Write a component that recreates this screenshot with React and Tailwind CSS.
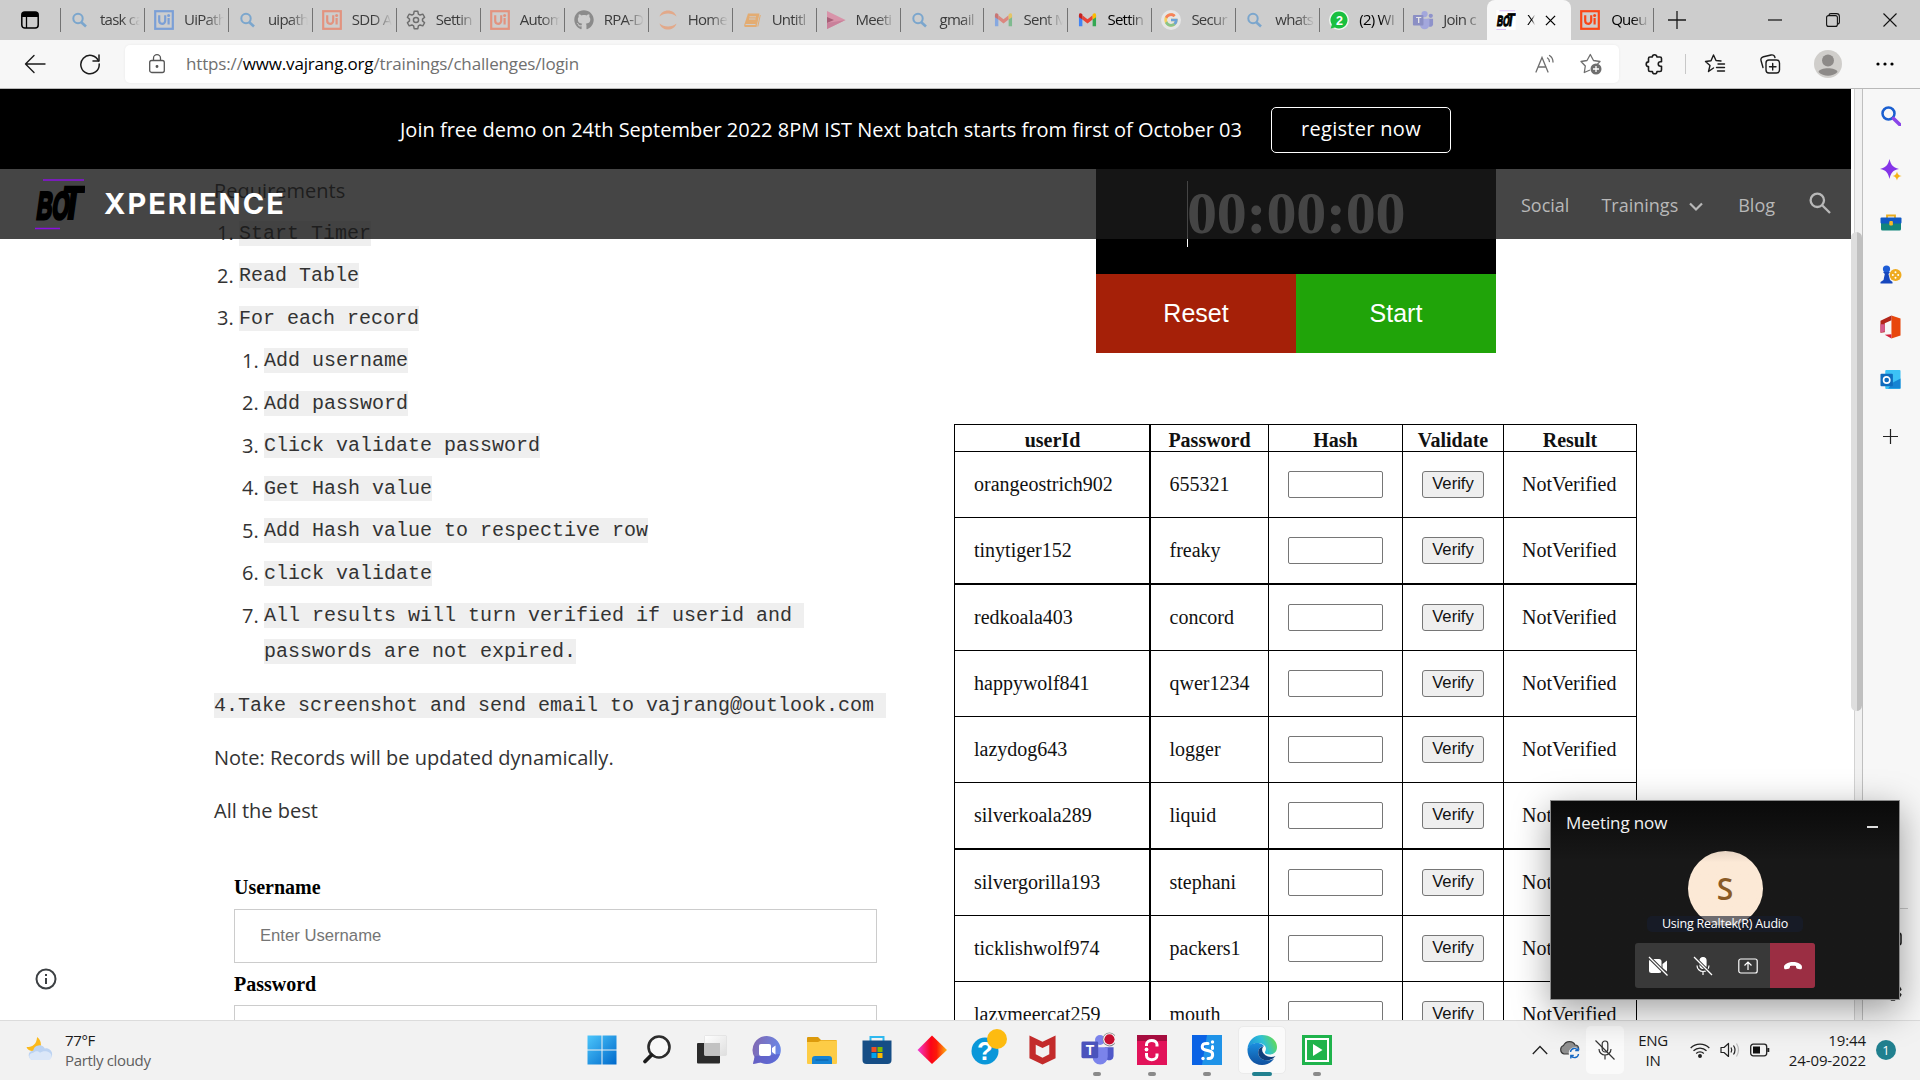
import React from "react";
import { FaGithub } from "react-icons/fa";
import { FcGoogle } from "react-icons/fc";

const seg = "font-['Open_Sans','Noto_Sans',sans-serif]";
const open = "font-['Open_Sans',sans-serif]";
const arial = "font-['Liberation_Sans',sans-serif]";
const times = "font-['Liberation_Serif',serif]";
const mono = "font-['Liberation_Mono',monospace]";

/* ---------- favicons ---------- */
const SearchFav = () => (
  <svg viewBox="0 0 20 20" className="w-5 h-5" fill="none" stroke="#7ba6cd" strokeWidth="2">
    <circle cx="8" cy="8.5" r="4.7" /><path d="M11.3 12.2 16 16.5" strokeWidth="2.6" />
  </svg>
);
const UiFav = ({ c }) => (
  <svg viewBox="0 0 20 20" className="w-5 h-5">
    <rect x="1.2" y="1.2" width="17.6" height="17.6" fill="none" stroke={c} strokeWidth="2.2" />
    <path d="M5.2 5.2v5.6a3 3 0 0 0 6 0V5.2" fill="none" stroke={c} strokeWidth="2.2" />
    <path d="M14.6 8v6.5" stroke={c} strokeWidth="2.2" /><circle cx="14.6" cy="5.6" r="1.5" fill={c} />
  </svg>
);
const GearFav = () => (
  <svg viewBox="0 0 24 24" className="w-[22px] h-[22px]" fill="none" stroke="#6e6e6e" strokeWidth="1.6" strokeLinejoin="round">
    <path d="M10 2.5h4l.6 3 1.9 1.1 2.9-1 2 3.4-2.3 2v2l2.3 2-2 3.4-2.9-1-1.9 1.1-.6 3h-4l-.6-3-1.9-1.1-2.9 1-2-3.4 2.3-2v-2l-2.3-2 2-3.4 2.9 1 1.9-1.1z" />
    <circle cx="12" cy="12" r="2.8" />
  </svg>
);
const Jupyter = () => (
  <svg viewBox="0 0 20 20" className="w-5 h-5" fill="#e2a98a">
    <path d="M1.500 6.500C4-1.500 16-1.500 18.500 6.500 14 2.500 6 2.500 1.500 6.500z" /><path d="M1.500 13.500C4 21.500 16 21.500 18.500 13.500 14 17.500 6 17.500 1.500 13.500z" />
  </svg>
);
const Book = () => (
  <svg viewBox="0 0 20 20" className="w-5 h-5">
    <path d="M6 3.500h11.500L14.500 17H3.200a1.600 1.600 0 0 1-1-2z" fill="#e3ac72" />
    <path d="M7.500 6.800h6.500M7 9h6.500M3.500 14.500h10" stroke="#cdcdcd" strokeWidth="1" /><path d="M18.300 5 15.800 16.500" stroke="#e3ac72" strokeWidth="1" />
  </svg>
);
const Stream = () => (
  <svg viewBox="0 0 20 20" className="w-5 h-5">
    <path d="M1 1 19.500 10 1 19z" fill="#d893a9" /><path d="M1 7v6l7-3z" fill="#a85f78" /><path d="M1 13 19.500 10 1 19z" fill="#c9809a" />
  </svg>
);
const Gmail = ({ o = 1 }) => (
  <svg viewBox="0 0 20 16" className="w-[19px] h-4" opacity={o}>
    <path d="M1 3v11.500h3.600V6z" fill="#4285f4" /><path d="M19 3v11.500h-3.600V6z" fill="#34a853" />
    <path d="M4.600 3 10 7.300 15.400 3v4.500L10 11.700 4.600 7.500z" fill="#ea4335" />
    <path d="M1 3c0-2.500 2-2.500 3.600-1v5.500L1 5z" fill="#c5221f" /><path d="M19 3c0-2.500-2-2.500-3.600-1v5.500L19 5z" fill="#fbbc04" />
  </svg>
);
const WhatsApp = () => (
  <svg viewBox="0 0 20 20" className="w-5 h-5">
    <circle cx="10" cy="10" r="10" fill="#f1f7f1" /><path d="M10 1.500a8.500 8.500 0 1 1-4 16L1.700 18.600 2.800 14.500A8.500 8.500 0 0 1 10 1.500z" fill="#19c03f" />
    <text x="10" y="14.500" textAnchor="middle" fontSize="12.500" fontWeight="700" fill="#fff" fontFamily="Liberation Sans">2</text>
  </svg>
);
const TeamsIcon = ({ faded, badge, className }) => (
  <svg viewBox="0 0 24 24" className={className}>
    <g opacity={faded ? 0.5 : 1}>
      <circle cx="20.500" cy="7.500" r="2.300" fill="#5059c9" /><circle cx="13.700" cy="5.500" r="3.400" fill="#7b83eb" />
      <path d="M17 10.500h6v6a3 3 0 0 1-4.500 2.500z" fill="#5059c9" /><path d="M8.500 10.500H19v6.500a5.200 5.200 0 0 1-10.400 0z" fill="#7b83eb" />
      <rect x="1" y="6.500" width="11.500" height="11.500" rx="1" fill="#4b53bc" />
      <text x="6.800" y="15.800" textAnchor="middle" fontSize="9.500" fontWeight="700" fill="#fff" fontFamily="Liberation Sans">T</text>
    </g>
    {badge && <><circle cx="20.200" cy="5" r="4.700" fill="#8a8a8a" /><circle cx="20.200" cy="5" r="4.200" fill="#fff" /><circle cx="20.200" cy="5" r="3.500" fill="#c50f2f" /></>}
  </svg>
);
const BotLogo = ({ className, line, plate }) => (
  <svg viewBox="0 0 50 52" className={className}>
    {plate && <rect width="50" height="52" fill="#fff" />}
    <path d="M8 2h41M0 50.500h25" stroke={line} strokeWidth="1.500" />
    <g fill="#000" stroke="#000" fontFamily="Liberation Sans" fontWeight="700">
      <text transform="translate(.5 41) skewX(-8) scale(.56 1)" fontSize="38.500" strokeWidth="3">BO</text>
      <text transform="translate(25 41) skewX(-8) scale(.72 1)" fontSize="47" strokeWidth="2">T</text>
    </g>
  </svg>
);

const tabs = [
  ["task ca", <SearchFav />], ["UiPath", <UiFav c="#7b9fd6" />], ["uipath", <SearchFav />], ["SDD A", <UiFav c="#e2937f" />],
  ["Settin", <GearFav />], ["Autom", <UiFav c="#e2937f" />], ["RPA-D", <FaGithub size={20} color="#8b8b8b" />], ["Home", <Jupyter />],
  ["Untitl", <Book />], ["Meeti", <Stream />], ["gmail", <SearchFav />], ["Sent M", <Gmail o={0.5} />],
  ["Settin", <Gmail />, true], ["Secur", <span className="w-5 h-5 rounded-full bg-[#e6e6e6] flex items-center justify-center"><FcGoogle size={16} opacity={0.6} /></span>], ["whats", <SearchFav />],
  ["(2) WI", <WhatsApp />, true], ["Join c", <TeamsIcon faded className="w-[22px] h-[22px]" />],
];
const fade = "[mask-image:linear-gradient(to_right,#000_55%,transparent_100%)]";

function TabStrip() {
  return (
    <div className={`h-10 bg-[#cdcdcd] flex items-end shrink-0 text-[15px] tracking-[-0.75px] ${seg}`}>
      <div className="w-[60px] h-full flex items-center justify-center">
        <svg viewBox="0 0 20 20" className="w-5 h-5"><rect x="1.800" y="2" width="16.400" height="16" rx="3" fill="none" stroke="#000" strokeWidth="1.500" /><path d="M2 7V5a3 3 0 0 1 3-3h10a3 3 0 0 1 3 3v2z" /><path d="M6.500 7v11" stroke="#000" strokeWidth="1.300" /></svg>
      </div>
      {tabs.map(([t, icon, dark], i) => (
        <div key={i} className="flex-1 max-w-[83.960px] h-full flex items-center">
          <div className="w-px h-6 bg-[#737373]" />
          <div className="w-[38px] flex justify-center shrink-0">{icon}</div>
          <div className={`w-[41px] pl-px pb-0.5 overflow-hidden whitespace-nowrap ${fade} ${dark ? "text-black" : "text-[#3c3c3c]"}`}>{t}</div>
        </div>
      ))}
      <div className="w-[84px] h-10 bg-[#f7f7f7] rounded-t-[8px] flex items-center shrink-0">
        <div className="w-[37px] flex justify-center"><BotLogo plate line="#bf8af0" className="w-5 h-5" /></div>
        <div className={`w-[8px] ml-[3px] pb-0.5 overflow-hidden text-black ${fade}`}>X</div>
        <svg viewBox="0 0 12 12" className="w-[11px] h-[11px] ml-[10px]"><path d="M1 1l10 10M11 1 1 11" stroke="#000" strokeWidth="1.400" /></svg>
      </div>
      <div className="w-[83px] h-full flex items-center shrink-0">
        <div className="w-[37px] flex justify-center"><UiFav c="#fa4616" /></div>
        <div className={`w-[38px] ml-[3px] pb-0.5 overflow-hidden whitespace-nowrap text-black ${fade}`}>Queu</div>
        <div className="w-px h-6 bg-[#737373] ml-auto" />
      </div>
      <div className="w-[46px] h-full flex items-center justify-center shrink-0">
        <svg viewBox="0 0 18 18" className="w-[18px] h-[18px]"><path d="M9 0v18M0 9h18" stroke="#1a1a1a" strokeWidth="1.300" /></svg>
      </div>
      <div className="w-[219px] h-full flex items-center justify-end pr-[22px] gap-[43.500px] shrink-0">
        <svg viewBox="0 0 14 14" className="w-[14px] h-[14px]"><path d="M0 7h14" stroke="#111" strokeWidth="1.200" /></svg>
        <svg viewBox="0 0 14 14" className="w-[14px] h-[14px]" fill="none" stroke="#111" strokeWidth="1.100"><rect x=".600" y="2.600" width="10.800" height="10.800" rx="2" /><path d="M3 2.500C3 1.200 4 .600 5 .600h5.500c1.800 0 2.900 1 2.900 2.900V9c0 1.200-.6 2-1.900 2" /></svg>
        <svg viewBox="0 0 14 14" className="w-[14px] h-[14px]"><path d="M.500.500l13 13M13.500.500l-13 13" stroke="#111" strokeWidth="1.100" /></svg>
      </div>
    </div>
  );
}

function Toolbar() {
  const st = { fill: "none", stroke: "#1b1b1b", strokeWidth: 1.4, strokeLinejoin: "round", strokeLinecap: "round" };
  return (
    <div className="h-[49px] bg-[#f7f7f7] border-b border-[#b9b9b9] flex items-center shrink-0">
      <div className="w-[70px] flex justify-center"><svg viewBox="0 0 22 20" className="w-[22px] h-5" {...st}><path d="M21 10H1.500M10 1.500 1.500 10l8.500 8.500" /></svg></div>
      <div className="w-[40px] flex justify-center"><svg viewBox="0 0 22 22" className="w-[22px] h-[22px]" {...st} strokeWidth="1.500"><path d="M19.500 8A9.200 9.200 0 1 0 20.200 11" /><path d="M20 2v6h-6" /></svg></div>
      <div className="ml-[15px] w-[1494px] h-[38px] rounded-[5px] bg-white shadow-[0_0_3px_rgba(0,0,0,0.06)] flex items-center">
        <svg viewBox="0 0 16 20" className="w-4 h-5 ml-[24px]" fill="none" stroke="#565656" strokeWidth="1.300"><rect x=".700" y="6.500" width="14.600" height="12" rx="2" /><path d="M4.500 6.500V4.200a3.500 3.500 0 0 1 7 0v2.300" /><circle cx="8" cy="12.500" r=".8" fill="#565656" /></svg>
        <div className={`ml-[21px] text-[17px] tracking-[-0.16px] text-[#707070] whitespace-nowrap ${seg}`}>https://<span className="text-black">www.vajrang.org</span>/trainings/challenges/login</div>
        <div className="ml-auto flex items-center gap-[25px] pr-[17px]">
          <svg viewBox="0 0 20 20" className="w-5 h-5 ml-px" fill="none" stroke="#6e6e6e" strokeWidth="1.300" strokeLinecap="round"><path d="M1 18 7 3.500 13 18M3 13h8M12.500 4c1.300.8 1.900 2 1.900 3.600M14.500 1.500c2.300 1.500 3.500 3.500 3.500 6.500" /></svg>
          <svg viewBox="0 0 22 22" className="w-[22px] h-[22px]" fill="none" stroke="#6e6e6e" strokeWidth="1.300" strokeLinejoin="round"><path d="M10 17 4.300 19.500l1-6.500L1 8.500l6-1 3.300-6 3.200 6 6.500 1-2.500 2.500" /><circle cx="16" cy="16" r="5.500" fill="#6e6e6e" stroke="none" /><path d="M16 13v6M13 16h6" stroke="#fff" /></svg>
        </div>
      </div>
      <div className="flex-1 flex items-center pl-[24px]">
        <svg viewBox="0 0 22 22" className="w-[22px] h-[22px]" {...st} strokeWidth="1.600"><path d="M7 4h2.300a2.300 2.300 0 0 1 4.600 0H17a1.500 1.500 0 0 1 1.500 1.500v3.300h-1a2.200 2.200 0 0 0 0 4.500h1V17a1.500 1.500 0 0 1-1.500 1.500h-3a2.300 2.300 0 0 1-4.600 0H7A1.500 1.500 0 0 1 5.500 17v-3.500a2.300 2.300 0 0 1 0-4.600V5.500A1.500 1.500 0 0 1 7 4z" /></svg>
        <div className="w-px h-5 bg-[#c8c8c8] ml-[20px]" />
        <svg viewBox="0 0 22 22" className="w-[22px] h-[22px] ml-[18px]" {...st}><path d="M9.500 15 4.500 18.500l1.500-6L1.500 8.500l5.500-.700L9.500 2l2.500 5.500 5 .5M14 11h6.500M12.500 14.500h8M13.500 18h7" /></svg>
        <svg viewBox="0 0 22 22" className="w-[22px] h-[22px] ml-[33px]" {...st}><rect x="7" y="7" width="13.500" height="13" rx="3" /><path d="M13.700 10.500v6.500M10.500 13.700H17M16 4.500C15.500 2.500 14 1.500 12 2L4.500 3.700C2.500 4.200 1.500 5.700 2 7.500L4 14.500" /></svg>
        <svg viewBox="0 0 28 28" className="w-7 h-7 ml-[33px]"><circle cx="14" cy="14" r="14" fill="#d0cecb" /><circle cx="14" cy="10.500" r="6" fill="#8d8a88" /><path d="M4.500 22c1-5 18-5 19 0A14 14 0 0 1 4.500 22z" fill="#8d8a88" /></svg>
        <svg viewBox="0 0 18 4" className="w-[18px] h-1 ml-[34px]"><circle cx="2" cy="2" r="1.600" /><circle cx="9" cy="2" r="1.600" /><circle cx="16" cy="2" r="1.600" /></svg>
      </div>
    </div>
  );
}

/* ---------- web page ---------- */
const Code = ({ children }) => <span className={`bg-[#efefef] whitespace-pre leading-[25px] h-[25px] inline-block ${mono}`}>{children}</span>;
const Li = ({ n, sub, children }) => (
  <div className={`h-[42.5px] flex items-center ${sub ? "pl-[28px]" : "pl-[3px]"}`}>
    <span className="w-[22px]">{n}.</span><Code>{children}</Code>
  </div>
);
const nested = ["Add username", "Add password", "Click validate password", "Get Hash value", "Add Hash value to respective row", "click validate"];

function Instructions() {
  return (
    <div className={`w-[700px] pt-[80px] text-[20px] text-[#333] ${open}`}>
      <div className="h-[43px] flex items-center">Requirements</div>
      <Li n={1}>Start Timer</Li><Li n={2}>Read Table</Li><Li n={3}>For each record</Li>
      {nested.map((t, i) => <Li key={t} n={i + 1} sub>{t}</Li>)}
      <Li n={7} sub>{"All results will turn verified if userid and "}</Li>
      <div className="pl-[50px] h-[28px] flex items-center"><Code>passwords are not expired.</Code></div>
      <div className="h-[53.300px] mt-[14px] flex items-center"><Code>{"4.Take screenshot and send email to vajrang@outlook.com "}</Code></div>
      <div className="h-[53.300px] flex items-center -mt-px">Note: Records will be updated dynamically.</div>
      <div className="h-[53.300px] flex items-center">All the best</div>
      <form className="pl-[20px] pt-[36px] w-[663px] text-black">
        <label className={`block font-bold h-[35px] leading-[27px] ${times}`}>Username</label>
        <div className={`h-[54px] border border-[#ccc] flex items-center pl-[25px] pb-px text-[16.670px] text-[#757575] ${arial}`}>Enter Username</div>
        <label className={`block font-bold h-[42px] leading-[42px] ${times}`}>Password</label>
        <div className="h-[54px] border border-[#ccc]" />
      </form>
    </div>
  );
}

const rows = [
  ["orangeostrich902", "655321"], ["tinytiger152", "freaky"], ["redkoala403", "concord"], ["happywolf841", "qwer1234"], ["lazydog643", "logger"],
  ["silverkoala289", "liquid"], ["silvergorilla193", "stephani"], ["ticklishwolf974", "packers1"], ["lazymeercat259", "mouth"],
];
const cols = "grid grid-cols-[196px_118px_134px_101px_133px]";
const cell = "border-l border-black flex items-center";

function Records() {
  return (
    <div className={`w-[683px] border-r border-black text-[20px] text-[#111] ${times}`}>
      <div className={`${cols} h-[27px] border-t border-black font-bold`}>
        {["userId", "Password", "Hash", "Validate", "Result"].map((h, i) => (
          <div key={h} className={`border-black flex items-center justify-center pb-[2px] ${i === 1 ? "border-l-2 -ml-px" : "border-l"}`}>{h}</div>
        ))}
      </div>
      {rows.map(([u, p], i) => (
        <div key={u} className={`${cols} border-black ${i === 2 || i === 6 ? "border-t-2 h-[67px]" : "border-t h-[66px]"}`}>
          <div className={`${cell} pl-[19px] pb-[2px]`}>{u}</div>
          <div className="border-l-2 -ml-px border-black flex items-center pl-[18.500px] pb-[2px]">{p}</div>
          <div className={`${cell} pl-[19px]`}><div className="w-[95px] h-[27px] border border-[#767676] rounded-[2px] bg-white" /></div>
          <div className={`${cell} pl-[19px]`}><button className={`w-[62px] h-[27px] border border-[#767676] rounded-[3px] bg-[#efefef] text-[16.670px] leading-none ${arial}`}>Verify</button></div>
          <div className={`${cell} pl-[18px] pb-[2px]`}>NotVerified</div>
        </div>
      ))}
    </div>
  );
}

function Timer() {
  return (
    <div className="w-[400px] ml-[142px]">
      <div className="h-[185px] bg-black flex items-end pl-[91px] pb-[27px]">
        <div className={`border-l border-white h-[66px] leading-[64px] text-[60px] tracking-[-0.2px] font-bold text-white ${times}`}><span className="-ml-px">00:00:00</span></div>
      </div>
      <div className={`grid grid-cols-2 h-[79px] text-[25px] text-white ${arial}`}>
        <div className="bg-[#a52008] flex items-center justify-center">Reset</div>
        <div className="bg-[#20a409] flex items-center justify-center">Start</div>
      </div>
    </div>
  );
}

function SiteHeader() {
  return (
    <header className={`absolute inset-x-0 top-0 ${open}`}>
      <div className="h-20 bg-black flex items-center text-[20px] text-white pl-[400px] pt-[2px] whitespace-nowrap">
        <div className="w-[871px]">Join free demo on 24th September 2022 8PM IST Next batch starts from first of October 03</div>
        <div className="w-[180px] h-[46px] rounded-[5px] border border-white flex items-center justify-center pb-[2px] tracking-[0.3px]">register now</div>
      </div>
      <div className="h-[70px] bg-[rgba(26,26,26,0.81)] flex items-center text-[18px] text-[#b8b8b8]">
        <BotLogo line="#8a10e0" className="w-[50px] h-[52px] ml-[35px]" />
        <div className="ml-[19px] pb-[2px] text-[29px] leading-none font-bold text-white tracking-[2px] font-['Inter',sans-serif]">XPERIENCE</div>
        <div className="ml-auto flex items-center pr-[20px] pt-[2px]">
          <span className="mr-[32px]">Social</span><span>Trainings</span>
          <svg viewBox="0 0 14 10" className="w-[14px] h-[10px] ml-[11px] mr-[35px] mt-1"><path d="M1 1.500 7 7.500l6-6" fill="none" stroke="#b8b8b8" strokeWidth="2.200" /></svg>
          <span className="mr-[34px]">Blog</span>
          <svg viewBox="0 0 22 22" className="w-[22px] h-[22px] -mt-1" fill="none" stroke="#b8b8b8" strokeWidth="2.300"><circle cx="8.300" cy="8.300" r="6.700" /><path d="m13.200 13.200 7.800 7.800" /></svg>
        </div>
      </div>
    </header>
  );
}

function Sidebar() {
  const box = "h-[52.700px] flex items-center justify-center";
  return (
    <aside className="flex-1 bg-[#f7f7f7] flex flex-col pr-[2px]">
      <div className="h-[1px]" />
      <div className={box}><svg viewBox="0 0 20 20" className="w-5 h-5" fill="none"><circle cx="7.500" cy="7.500" r="6" stroke="#1a5fd0" strokeWidth="2.500" /><path d="m12.500 12.500 6.200 6" stroke="#8a45e8" strokeWidth="3.600" strokeLinecap="round" /></svg></div>
      <div className={`${box} pt-[2px]`}><svg viewBox="0 0 22 22" className="w-[22px] h-[22px]"><path d="M9.500 0c1.500 6 3 8 9.500 10-6.500 1.500-8 3.500-9.500 10C8 13.500 6.500 11.500 0 10 6.500 8 8 6 9.500 0z" fill="#8535e8" /><path d="M17 12.500c.7 3 1.500 3.800 4.800 4.500-3.300.7-4 1.500-4.800 4.500-.8-3-1.500-3.800-4.500-4.500 3-.7 3.800-1.500 4.500-4.500z" fill="#f5b316" /></svg></div>
      <div className={box}><svg viewBox="0 0 22 18" className="w-[22px] h-[18px]"><path d="M7 5V2.500h8V5" fill="none" stroke="#e9ab1c" strokeWidth="1.800" /><rect x="1" y="8" width="20" height="9.500" rx="1.500" fill="#12857c" /><rect x=".5" y="4.500" width="21" height="6" rx="1" fill="#1159c5" /><rect x="9.300" y="8" width="3.600" height="4.500" rx="1" fill="#f6b92a" /></svg></div>
      <div className={box}><svg viewBox="0 0 22 19" className="w-[22px] h-[19px]"><circle cx="15.500" cy="10" r="6" fill="#efab1f" /><g fill="#fff"><circle cx="15.500" cy="7.300" r="1" /><circle cx="18.200" cy="10" r="1" /><circle cx="12.800" cy="10" r="1" /><circle cx="15.500" cy="12.700" r="1" /></g><circle cx="6.500" cy="4" r="3.600" fill="#1d5cd6" /><path d="M3 7h7l-1.500 2 1.500 6 2.500 2v1.500H.500V17L3.500 15 4.800 9z" fill="#1747bd" /></svg></div>
      <div className={box}><svg viewBox="0 0 22 24" className="w-[21px] h-6"><path d="M12 0 21.500 3v18L12 24V19.500V5z" fill="#e8470c" /><path d="M12 0v5L5 8v9.500L.5 18V5.500z" fill="#b3261a" /><path d="M.5 9v9l4.500-1.500V9z" fill="#d75b8d" /><path d="m5 20 7-.5V24z" fill="#d3203c" /></svg></div>
      <div className={box}><svg viewBox="0 0 22 22" className="w-[21px] h-[21px]"><rect x="5.500" y="1" width="16" height="20" rx="1" fill="#3cc2f5" /><path d="m14 14 7.500-4v10.500h-13z" fill="#1684d3" /><rect x=".5" y="5" width="13" height="13" rx="1" fill="#0f6cbd" /><circle cx="7" cy="11.500" r="3.300" fill="none" stroke="#fff" strokeWidth="1.700" /></svg></div>
      <div className="h-[60px] flex items-center justify-center"><svg viewBox="0 0 15 15" className="w-[15px] h-[15px]"><path d="M7.500 0v15M0 7.500h15" stroke="#222" strokeWidth="1.200" /></svg></div>
      <div className="mt-auto mb-[18px]">
        <div className="h-px bg-[#c8c8c8] mx-[10px]" />
        <div className="pt-[22px] pl-[23px] text-[#222]">
          <svg viewBox="0 0 16 16" className="w-4 h-4" fill="none" stroke="currentColor" strokeWidth="1.600"><rect x="1" y="2" width="14" height="12" rx="2.500" /></svg>
          <svg viewBox="0 0 24 24" className="w-[20px] h-[20px] mt-[35px] -ml-[3px]" fill="none" stroke="currentColor" strokeWidth="1.800" strokeLinejoin="round"><path d="M10 2.500h4l.6 3 1.900 1.100 2.900-1 2 3.400-2.300 2v2l2.300 2-2 3.400-2.900-1-1.900 1.100-.6 3h-4l-.6-3-1.900-1.100-2.900 1-2-3.400 2.300-2v-2l-2.300-2 2-3.400 2.900 1 1.900-1.100z" /></svg>
        </div>
      </div>
    </aside>
  );
}

function MeetingPopup() {
  const b = "w-[45px] h-[45px] flex items-center justify-center";
  return (
    <div className={`absolute left-[1550px] top-[711px] w-[350px] h-[200px] bg-[#171717] bg-linear-to-b from-[#0a0a0a] to-[#181818] to-30% border border-[#8a8a8a] shadow-[0_10px_34px_rgba(0,0,0,0.38)] text-white flex flex-col items-center ${seg}`}>
      <div className="h-[43px] w-full flex items-center justify-between pl-[15px] pr-[21px]">
        <span className="text-[17px] tracking-[-0.13px] text-[#f2f2f2]">Meeting now</span>
        <span className="w-[11px] h-[2px] bg-[#ddd] mt-[8px]" />
      </div>
      <div className="mt-[7px] w-[75px] h-[75px] rounded-full bg-linear-to-b from-[#e6d4c3] to-[#fce9d6] to-15% flex items-center justify-center text-[30px] font-semibold text-[#8a5a26]">S</div>
      <div className="relative -mt-[10.500px] w-[156px] h-4 rounded-[5px] bg-[rgba(22,29,46,0.62)] text-[12.500px] leading-4 text-center tracking-[-0.22px] whitespace-nowrap">Using Realtek(R) Audio</div>
      <div className="mt-[11.500px] flex bg-[#393939] rounded-[3px] overflow-hidden">
        <div className={b}><svg viewBox="0 0 20 20" className="w-5 h-5"><rect x="1" y="3" width="12.500" height="14" rx="2.500" fill="#fff" /><path d="m14.500 8 4.500-3.500v11L14.500 12z" fill="#fff" /><path d="m0 0 20 20" stroke="#393939" strokeWidth="3.400" /><path d="m1 1 18.500 18.500" stroke="#fff" strokeWidth="1.200" /></svg></div>
        <div className={b}><svg viewBox="0 0 20 20" className="w-5 h-5" fill="none" stroke="#fff" strokeWidth="1.200"><rect x="7" y="1.500" width="6" height="11" rx="3" fill="#fff" /><path d="M4 9.500a6 6 0 0 0 12 0M10 15.500V19" /><path d="m1 1 18 18" stroke="#393939" strokeWidth="3.200" /><path d="m1 1 18 18" /></svg></div>
        <div className={b}><svg viewBox="0 0 20 16" className="w-5 h-4" fill="none" stroke="#fff" strokeWidth="1.200"><rect x=".8" y="1" width="18.400" height="14" rx="2" /><path d="M10 12V4.500M6.500 7.500 10 4l3.500 3.500" /></svg></div>
        <div className={`${b} bg-[#9b2e43]`}><svg viewBox="0 0 20 10" className="w-5 h-[10px]"><path d="M10 1c5.500 0 9.300 2.600 9 5.300-.1 2-1 2.200-2 2l-2.600-.6c-1.200-.3-1.300-1-1.500-2.700C11.300 4.500 8.700 4.500 7.100 5c-.2 1.700-.3 2.400-1.500 2.700L3 8.300c-1 .2-1.900 0-2-2C.7 3.600 4.500 1 10 1z" fill="#fff" /></svg></div>
      </div>
    </div>
  );
}

/* ---------- taskbar ---------- */
const App30 = ({ children, run, active }) => (
  <div className="w-[55px] h-full flex items-center justify-center relative pb-[2px]">
    <div className={active ? "w-12 h-12 rounded-[5px] bg-[#fafafa] border border-[#ebebeb] flex items-center justify-center" : ""}>{children}</div>
    {run && <span className="absolute bottom-[4px] w-2 h-1 rounded-full bg-[#8a8a8a]" />}
    {active && <span className="absolute bottom-[4px] w-5 h-1 rounded-full bg-[#21808f]" />}
  </div>
);
const S = ({ children, className = "w-[30px] h-[30px]" }) => <svg viewBox="0 0 30 30" className={className}>{children}</svg>;

function Taskbar() {
  return (
    <footer className={`h-[60px] bg-[#f2f2f2] border-t border-[#dcdcdc] flex items-center shrink-0 pl-[25px] ${seg}`}>
      <svg viewBox="0 0 30 26" className="w-[29px] h-[25px] mb-[4px]"><path d="M12.500 1c-.5 7-4 10.500-11 10.500C3 18 16 17 16.500 9 16.500 5.500 15 3 12.500 1z" fill="#fbb91c" /><path d="M9 25a5 5 0 0 1-.5-10 6.500 6.500 0 0 1 12-2 6 6 0 0 1 3 12z" fill="#bcd3f2" /><path d="M8 25c-5 0-5-7 .5-7.500 2-2.500 6-2 7 0 3-3 12-2 12 3.500 0 3-2 4-4 4z" fill="#dbe7f8" /></svg>
      <div className="ml-[11px] pb-[2px] w-[485px] text-[15px] leading-[20px] tracking-[-0.33px]"><div className="text-[#1a1a1a]">77°F</div><div className="text-[#5e5e5e]">Partly cloudy</div></div>
      <div className="flex h-full ml-[24.500px]">
        <App30><S><defs><linearGradient id="w" x1="0" y1="0" x2="1" y2="1"><stop stopColor="#4cc6fb" /><stop offset="1" stopColor="#0069cb" /></linearGradient></defs><path d="M.5.500h14v14H.500zM15.500.500h14v14h-14zM.500 15.500h14v14H.500zM15.500 15.500h14v14h-14z" fill="url(#w)" /></S></App30>
        <App30><S><circle cx="17" cy="12" r="10.500" fill="#f8f8f8" stroke="#2c2c2c" strokeWidth="2.600" /><path d="M9.500 20 3 26.500" stroke="#1b1b1b" strokeWidth="3.800" strokeLinecap="round" /></S></App30>
        <App30><S><defs><linearGradient id="tv" x1="0" y1="0" x2="1" y2="1"><stop stopColor="#fff" /><stop offset="1" stopColor="#dedede" /></linearGradient></defs><rect x="0" y="8" width="23" height="20.500" rx="1" fill="#2b2b2b" /><rect x="7.500" y=".5" width="22" height="20" rx="1" fill="url(#tv)" stroke="#dcdcdc" strokeWidth=".6" /><rect x="7.500" y="8" width="15.500" height="12.500" fill="#c2c2c2" /></S></App30>
        <App30><S><defs><linearGradient id="c" x1="0" y1="0" x2="1" y2="0.300"><stop stopColor="#8366ae" /><stop offset="1" stopColor="#6a87e6" /></linearGradient></defs><path d="M15 1a14 14 0 1 1-6.500 26.500L1 29l1.500-7A14 14 0 0 1 15 1z" fill="url(#c)" /><path d="M15 29A14 14 0 0 0 28 19L3 21l-2 8 7.500-1.500z" fill="#5657c8" opacity=".6" /><rect x="7" y="9" width="12" height="12" rx="2" fill="#fff" /><path d="m20 13 3.500-2.500v9L20 17z" fill="#fff" /></S></App30>
        <App30><S><path d="M0 3a1 1 0 0 1 1-1h10l3 3h15.500v8H0z" fill="#dc9a0c" /><path d="M0 7h11l3-1.500h16V28a1 1 0 0 1-1 1H1a1 1 0 0 1-1-1z" fill="#fdcc46" /><path d="M5 29v-5a3 3 0 0 1 3-3h14a3 3 0 0 1 3 3v5z" fill="#1583d4" /><path d="M8.500 25h13" stroke="#0c5b9c" /></S></App30>
        <App30><S><path d="M8.500 6V2h13v4" fill="none" stroke="#2fb9ef" strokeWidth="2" /><path d="M.5 5.500h29V25a4 4 0 0 1-4 4h-21a4 4 0 0 1-4-4z" fill="#164e86" /><path d="M9.500 12h5v5h-5z" fill="#f25022" /><path d="M15.500 12h5v5h-5z" fill="#7fba00" /><path d="M9.500 18h5v5h-5z" fill="#00a4ef" /><path d="M15.500 18h5v5h-5z" fill="#ffb900" /></S></App30>
        <App30><S><defs><linearGradient id="d"><stop stopColor="#f03cd6" /><stop offset=".45" stopColor="#fc0418" /><stop offset=".65" stopColor="#fc1a08" /><stop offset="1" stopColor="#fdb813" /></linearGradient></defs><path d="M15 0.500 30 15 15 29 0.500 15z" fill="url(#d)" /></S></App30>
        <App30><svg viewBox="0 0 36 36" className="w-9 h-9 -mt-[5px] ml-[3px]"><circle cx="14" cy="22" r="13.500" fill="#0a97d9" /><text x="14" y="31" textAnchor="middle" fontSize="26" fontWeight="700" fill="#fff" fontFamily="Liberation Sans">?</text><circle cx="26" cy="10" r="10" fill="#fdbb10" /></svg></App30>
        <App30><S className="w-[29px] h-[30px]"><path d="M1.500 0 15 6.500 28.500 0v23.500L15 30 1.500 23.500z" fill="#c32b2b" /><path d="M8 9.500 15 13l7-3.500v9.800L15 23l-7-3.700z" fill="#f2f2f2" /></S></App30>
        <App30 run><TeamsIcon badge className="w-[35px] h-[35px]" /></App30>
        <App30 run><S><rect width="30" height="30" fill="#e2135a" /><path d="M0 0h30v6H0z" fill="#a60d3f" /><path d="M20 11.500V9.500C20 4 9.500 4 9.500 9.500V11M9.500 18v2.500c0 5.500 10.500 5.500 10.500 0v-2" fill="none" stroke="#fff" strokeWidth="3" /><circle cx="9.500" cy="14.500" r="1.900" fill="#fff" /></S></App30>
        <App30 run><S><rect width="30" height="30" fill="#0b63e5" /><path d="M15 0h15v30H10z" fill="#1f93e8" /><path d="M16 8.500h-1.500c-5.500 0-5.500 5.500-1 6.500l4 1c4.500 1 4 7.500-.5 7.500h-1" fill="none" stroke="#fff" strokeWidth="3" strokeLinecap="round" /><g fill="#fff"><circle cx="20.500" cy="7" r="1.700" /><circle cx="11" cy="23.500" r="1.700" /><rect x="19" y="10" width="3" height="5" rx="1.500" /></g></S></App30>
        <App30 active><S><defs><linearGradient id="e1" x1="0" y1=".6" x2="1" y2=".3"><stop stopColor="#1d8fdc" /><stop offset=".55" stopColor="#2fc0d6" /><stop offset="1" stopColor="#66dc4a" /></linearGradient><linearGradient id="e2" x1="0" y1="0" x2="0" y2="1"><stop stopColor="#1b8fe0" /><stop offset="1" stopColor="#0f4f9e" /></linearGradient></defs><path d="M.5 14C1 6 7 0 15 0c9 0 15 6 15 12 0 5-3.500 7.500-7.500 7.500-3.500 0-5-1-4.500-2.500 3-5-1.500-9-6.500-9C6 8 2 11 .5 14z" fill="url(#e1)" /><path d="M.5 14C2 9.500 7 7.500 11.500 8c3 .3 5 2 5.500 3.500-5 0-7 5-5 9.500 2.500 5 10 5.500 15 2.500C25 27.500 20 30 15 30 6 30 0 22.500.5 14z" fill="url(#e2)" /><path d="M12 21c-2-4.500 0-9 4.500-9.500-3 3-1 8 4.500 10 2.500.800 5.500.5 7.500-.5C24 27 14.500 26.500 12 21z" fill="#0f3f7c" /></S></App30>
        <App30 run><S><rect width="30" height="30" fill="#1fb34c" /><rect x="4" y="4" width="22" height="22" fill="none" stroke="#fff" strokeWidth="2" /><path d="M11 9v12l9.500-6z" fill="#fff" /></S></App30>
      </div>
      <div className="ml-auto flex items-center h-full pr-[24px] pb-[2px] text-[#1a1a1a]">
        <svg viewBox="0 0 16 10" className="w-4 h-[10px]"><path d="m.8 9 7.200-7.500L15.200 9" fill="none" stroke="#222" strokeWidth="1.300" /></svg>
        <svg viewBox="0 0 22 18" className="w-[22px] h-[18px] ml-[11px]"><path d="M5 13a4.500 4.500 0 0 1-.5-8.500C7-.5 14-.5 16 4c5 0 5 9 0 9z" fill="#8f8f8f" stroke="#3a3a3a" strokeWidth="1.200" /><circle cx="15.500" cy="12" r="5.800" fill="#f2f2f2" /><path d="M11.500 11a4 4 0 0 1 7.500-1.500M19.500 13a4 4 0 0 1-7.500 1.500M19.200 6.500v3h-3M11.800 17.500v-3h3" fill="none" stroke="#1769c4" strokeWidth="1.400" /></svg>
        <div className="w-[38px] h-12 rounded-[5px] bg-[#fafafa] ml-[5px] flex items-center justify-center"><svg viewBox="0 0 20 20" className="w-5 h-5" fill="none" stroke="#333" strokeWidth="1.200"><rect x="7.200" y="1" width="5.600" height="11" rx="2.800" /><path d="M4 9a6 6 0 0 0 12 0M10 15v4.500M.500.500l19 19" /></svg></div>
        <div className="w-[58px] text-center text-[15px] leading-[20px] tracking-[-0.3px]">ENG<br />IN</div>
        <svg viewBox="0 0 20 16" className="w-5 h-4 ml-[8px]" fill="none" stroke="#222" strokeWidth="1.300"><path d="M.7 6a13 13 0 0 1 18.600 0M3.500 8.800a9.200 9.200 0 0 1 13 0M6.200 11.500a5.400 5.400 0 0 1 7.600 0" /><circle cx="10" cy="14" r="1.300" fill="#222" /></svg>
        <svg viewBox="0 0 20 16" className="w-5 h-4 ml-[10px]" fill="none" stroke="#222" strokeWidth="1.200" strokeLinejoin="round"><path d="M1 5.500h3L8.500 1.500v13L4 10.500H1zM11 5.500q1.500 2.500 0 5M13.500 3.500q3 4.500 0 9" /><path d="M16.500 1.500q4 6.500 0 13" stroke="#bbb" /></svg>
        <svg viewBox="0 0 20 14" className="w-5 h-[14px] ml-[10px]" fill="none" stroke="#222" strokeWidth="1.300"><rect x=".7" y="1.200" width="16" height="11.600" rx="2.500" /><rect x="3" y="3.500" width="7" height="7" fill="#111" stroke="none" /><path d="M18.300 5v4" strokeWidth="2" /></svg>
        <div className="w-[96px] text-right text-[15px] leading-[20px] tracking-[-0.1px] whitespace-nowrap"><div>19:44</div><div>24-09-2022</div></div>
        <div className="w-5 h-5 rounded-full bg-[#21808f] text-white text-[13px] leading-5 text-center ml-[10px]">1</div>
      </div>
    </footer>
  );
}

export default function App() {
  return (
    <div className="w-[1920px] h-[1080px] flex flex-col overflow-hidden bg-white">
      <TabStrip />
      <Toolbar />
      <div className="flex-1 min-h-0 flex relative">
        <main className="w-[1851px] relative overflow-hidden bg-white flex pl-[214px] shrink-0">
          <Instructions />
          <div className="ml-[40px]">
            <Timer />
            <div className="h-[71px]" />
            <Records />
          </div>
          <SiteHeader />
          <svg viewBox="0 0 22 22" className="absolute left-[34.500px] top-[878.500px] w-[22px] h-[22px]" fill="none" stroke="#3c4043" strokeWidth="2"><circle cx="11" cy="11" r="9.500" /><path d="M11 10v6M11 6v2" /></svg>
        </main>
        <div className="w-3 bg-[#f1f1f1] border-l-[3px] border-l-white border-r border-r-[#bfbfbf] shrink-0 relative">
          <div className="h-full w-px bg-[#d2d2d2]" />
          <div className="absolute -left-[3px] top-[143px] w-[11px] h-[479px] rounded-full bg-linear-to-r from-[#dedede] from-50% to-[#c0c0c0] to-50%" />
        </div>
        <Sidebar />
        <MeetingPopup />
      </div>
      <Taskbar />
    </div>
  );
}
